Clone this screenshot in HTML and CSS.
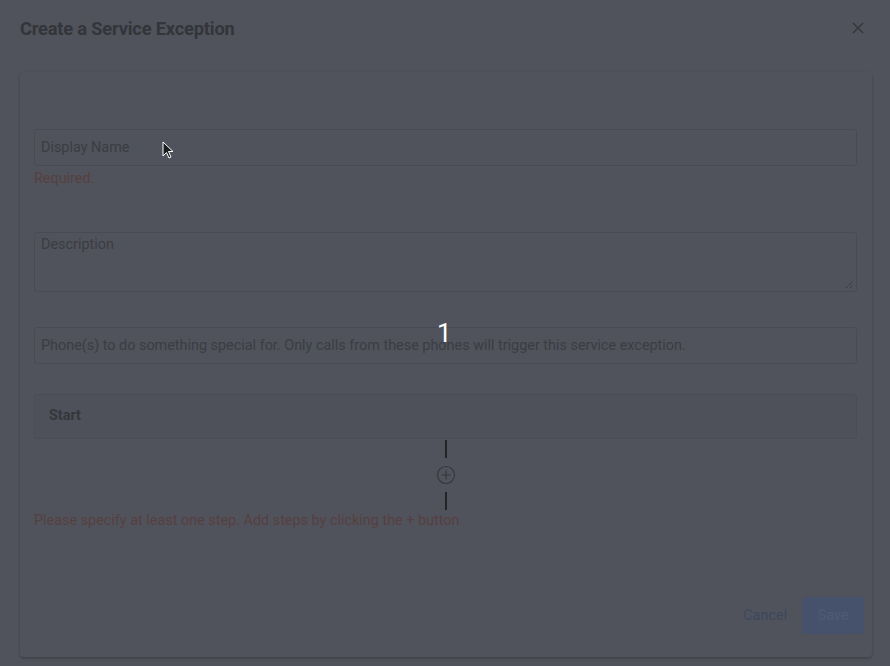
FILE: index.html
```html
<!DOCTYPE html>
<html lang="en">
<head>
    <meta charset="UTF-8">
    <meta name="viewport" content="width=device-width, initial-scale=1.0">
    <title>Create a Service Exception</title>
    <link rel="stylesheet" href="styles.css">
</head>
<body>
    <div class="dialog">
        <div class="dialog-header">
            <h1 class="dialog-title">Create a Service Exception</h1>
            <span class="close">
                <svg width="12" height="12" viewBox="0 0 12 12"><path d="M1 1 L11 11 M11 1 L1 11" stroke="currentColor" stroke-width="1.4" fill="none"/></svg>
            </span>
        </div>
        <div class="card">
            <div class="field">
                <div class="input">Display Name</div>
                <div class="error">Required.</div>
            </div>
            <div class="field field-desc">
                <div class="input textarea">Description
                    <svg class="grip" width="9" height="9" viewBox="0 0 9 9"><path d="M1 8 L8 1 M5 8 L8 5" stroke="currentColor" stroke-width="1" stroke-dasharray="1 1" fill="none"/></svg>
                </div>
            </div>
            <div class="field field-phones">
                <div class="input">Phone(s) to do something special for. Only calls from these phones will trigger this service exception.</div>
            </div>
            <div class="start">Start</div>
            <div class="flow">
                <span class="flow-line"></span>
                <svg class="flow-add" width="20" height="20" viewBox="0 0 20 20"><circle cx="10" cy="10" r="8.5" stroke="currentColor" stroke-width="1.2" fill="none"/><path d="M10 5.5 V14.5 M5.5 10 H14.5" stroke="currentColor" stroke-width="1.2"/></svg>
                <span class="flow-line"></span>
            </div>
            <div class="error error-steps">Please specify at least one step. Add steps by clicking the + button</div>
            <div class="actions">
                <span class="btn-cancel">Cancel</span>
                <span class="btn-save">Save</span>
            </div>
        </div>
    </div>
    <div class="step-badge">1</div>
    <svg class="cursor" width="14" height="20" viewBox="0 0 14 20"><path d="M1 1 L1 15 L4.5 11.5 L7 17 L9 16 L6.5 10.5 L11 10.5 Z" fill="#1c1d20" stroke="#ffffff" stroke-width="1"/></svg>
</body>
</html>
```

FILE: styles.css
```css
body {
    margin: 0;
    background-color: #50535c;
    font-family: Roboto, "Liberation Sans", sans-serif;
    height: 666px;
    overflow: hidden;
    position: relative;
}
.dialog-header {
    display: flex;
    justify-content: space-between;
    align-items: center;
    height: 56px;
    padding: 0 26px 0 20px;
}
.dialog-title {
    margin: 0;
    font-size: 18.3px;
    font-weight: 700;
    color: #33353a;
    letter-spacing: -0.2px;
}
.close {
    color: #33353a;
    display: flex;
}
.card {
    margin: 16px 18px 0 20px;
    padding: 57px 15px 0 14px;
    height: 585px;
    box-sizing: border-box;
    border-radius: 4px;
    box-shadow: 0 1px 3px rgba(0, 0, 0, 0.18), 0 2px 2px rgba(0, 0, 0, 0.08);
}
.input {
    border: 1px solid #484b53;
    border-radius: 3px;
    height: 37px;
    box-sizing: border-box;
    padding: 9px 6px;
    font-size: 14.4px;
    line-height: 17px;
    color: #3b3d43;
    position: relative;
}
.textarea {
    height: 60px;
    padding-top: 3px;
}
.grip {
    position: absolute;
    right: 2px;
    bottom: 2px;
    color: #2d2f34;
}
.error {
    font-size: 14.4px;
    line-height: 17px;
    color: #573f40;
    margin-top: 4px;
}
.field-desc {
    margin-top: 45px;
}
.field-phones {
    margin-top: 35px;
    margin-bottom: 30px;
}
.start {
    height: 45px;
    box-sizing: border-box;
    border: 1px solid #4a4d55;
    background-color: #4e5159;
    border-radius: 3px;
    padding: 12px 14px;
    font-size: 14.4px;
    line-height: 17px;
    font-weight: 700;
    color: #35373c;
}
.flow {
    display: flex;
    flex-direction: column;
    align-items: center;
    padding-top: 1px;
    color: #36383e;
}
.flow-line {
    width: 2px;
    height: 18px;
    background-color: #232428;
}
.flow-add {
    margin: 7px 0;
}
.error-steps {
    margin-top: 2px;
}
.actions {
    display: flex;
    justify-content: flex-end;
    align-items: center;
    gap: 15px;
    margin-top: 68px;
    margin-right: -7px;
}
.btn-cancel {
    font-size: 14.4px;
    color: #3d4860;
}
.btn-save {
    width: 62px;
    height: 37px;
    line-height: 37px;
    text-align: center;
    border-radius: 3px;
    background-color: #46526b;
    color: #4f5b74;
    font-size: 14.4px;
}
.step-badge {
    position: absolute;
    left: 437px;
    top: 318px;
    color: #ffffff;
    font-size: 26px;
    font-family: Roboto, sans-serif;
}
.cursor {
    position: absolute;
    left: 162px;
    top: 141px;
}
```
